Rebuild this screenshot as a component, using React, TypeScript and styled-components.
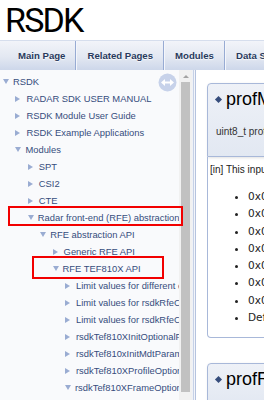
import React from 'react';
import styled, { createGlobalStyle } from 'styled-components';

const GlobalStyle = createGlobalStyle`
  html, body {
    margin: 0;
    padding: 0;
    width: 264px;
    height: 400px;
    overflow: hidden;
    background: #fff;
  }
`;

const Page = styled.div`
  position: relative;
  width: 264px;
  height: 400px;
  display: flex;
  flex-direction: column;
  overflow: hidden;
  font-family: 'Liberation Sans', Arial, sans-serif;
`;

const TitleArea = styled.div`
  height: 40px;
  line-height: 40px;
  padding-left: 5px;
  font-family: Roboto, 'Liberation Sans', sans-serif;
  font-size: 34px;
  letter-spacing: -1.8px;
  color: #000;
`;

const NavBar = styled.div`
  height: 29px;
  display: flex;
  padding-left: 7px;
  border-top: 1px solid #d6deed;
  background: linear-gradient(#f2f4f9 0%, #e3e8f2 55%, #cdd7ea 100%);
`;

const Tab = styled.div`
  display: flex;
  align-items: center;
  padding: 0 10px 0 11px;
  font-size: 9.6px;
  font-weight: bold;
  color: #283a5d;
  text-shadow: 0 1px 1px rgba(255, 255, 255, 0.9);
  white-space: nowrap;
  border-right: 1px solid #97abd3;
  box-shadow: 1px 0 0 #f4f6fb;
`;

const Main = styled.div`
  flex: 1;
  display: flex;
  min-height: 0;
`;

const SideNav = styled.div`
  position: relative;
  width: 179px;
  flex-shrink: 0;
  background: #f9fafc;
  overflow: hidden;
  padding-top: 3px;
  box-sizing: border-box;
`;

const Row = styled.div<{ $level: number }>`
  height: 17px;
  display: flex;
  align-items: center;
  padding-left: ${(p) => 3 + p.$level * 12.4}px;
  white-space: nowrap;
  font-size: 9.4px;
  color: #364d7c;
`;

const Arrow = styled.span<{ $open: boolean }>`
  display: inline-block;
  width: 0;
  height: 0;
  flex-shrink: 0;
  margin-right: ${(p) => (p.$open ? 4 : 6)}px;
  ${(p) =>
    p.$open
      ? `border-left: 3.5px solid transparent;
         border-right: 3.5px solid transparent;
         border-top: 5px solid #9aacd2;`
      : `border-top: 3.5px solid transparent;
         border-bottom: 3.5px solid transparent;
         border-left: 5px solid #9aacd2;`}
`;

const SyncButton = styled.div`
  position: absolute;
  top: 3px;
  right: 2px;
  width: 19px;
  height: 19px;
`;

const Scrollbar = styled.div`
  width: 13px;
  flex-shrink: 0;
  background: #f1f1f1;
  display: flex;
  flex-direction: column;
  align-items: center;
`;

const ScrollArrow = styled.div`
  margin-top: 5px;
  width: 0;
  height: 0;
  border-left: 3px solid transparent;
  border-right: 3px solid transparent;
  border-bottom: 3px solid #a3a3a3;
`;

const ScrollThumb = styled.div`
  margin-top: 4px;
  width: 9px;
  height: 310px;
  background: #c1c1c1;
`;

const Splitter = styled.div`
  width: 5px;
  flex-shrink: 0;
  background: linear-gradient(
    to right,
    #eef1f7 0,
    #eef1f7 1px,
    #c6d1e6 1px,
    #c6d1e6 2px,
    #f3f5fa 2px,
    #f3f5fa 3px,
    #b5c3df 3px,
    #b5c3df 4px,
    #fff 4px
  );
`;

const Content = styled.div`
  flex: 1;
  min-width: 0;
  overflow: hidden;
  padding: 13px 0 0 10px;
`;

const Card = styled.div`
  width: 320px;
  margin-bottom: 25px;
`;

const CardHeader = styled.div`
  border: 1px solid #a8b8d9;
  border-radius: 4px 4px 0 0;
  background: linear-gradient(#eef1f7, #e2e8f2);
  box-shadow: 1px 1px 3px rgba(0, 0, 0, 0.12);
  padding-bottom: 12px;
`;

const CardTitle = styled.div`
  height: 31px;
  display: flex;
  align-items: center;
  padding-left: 8px;
  font-size: 18px;
  color: #000;
`;

const Diamond = styled.span`
  display: inline-block;
  width: 5px;
  height: 5px;
  margin-right: 5px;
  background: #364d7c;
  transform: rotate(45deg);
`;

const Proto = styled.div`
  margin-top: 5px;
  padding-left: 8px;
  height: 24px;
  line-height: 24px;
  font-size: 10px;
  color: #333;
  white-space: nowrap;
`;

const CardBody = styled.div`
  border: 1px solid #a8b8d9;
  border-top: none;
  border-radius: 0 0 4px 4px;
  padding: 4px 0 11px 2px;
  font-size: 10px;
  color: #222;
`;

const ParamLine = styled.div`
  height: 17px;
  line-height: 17px;
  white-space: nowrap;
`;

const ValueList = styled.ul`
  margin: 10px 0 0 0;
  padding-left: 38px;
  list-style: disc;
`;

const ValueItem = styled.li`
  height: 17.3px;
  line-height: 17.3px;
  font-family: 'DejaVu Sans', sans-serif;
  font-size: 10.5px;
  color: #222;
  white-space: nowrap;
`;

const Highlight = styled.div<{ $x: number; $y: number; $w: number; $h: number }>`
  position: absolute;
  left: ${(p) => p.$x}px;
  top: ${(p) => p.$y}px;
  width: ${(p) => p.$w}px;
  height: ${(p) => p.$h}px;
  box-sizing: border-box;
  border: 2px solid #f20000;
  pointer-events: none;
`;

const tabs = ['Main Page', 'Related Pages', 'Modules', 'Data Structures'];

const tree: { label: string; level: number; open: boolean }[] = [
  { label: 'RSDK', level: 0, open: true },
  { label: 'RADAR SDK USER MANUAL', level: 1, open: false },
  { label: 'RSDK Module User Guide', level: 1, open: false },
  { label: 'RSDK Example Applications', level: 1, open: false },
  { label: 'Modules', level: 1, open: true },
  { label: 'SPT', level: 2, open: false },
  { label: 'CSI2', level: 2, open: false },
  { label: 'CTE', level: 2, open: false },
  { label: 'Radar front-end (RFE) abstraction', level: 2, open: true },
  { label: 'RFE abstraction API', level: 3, open: true },
  { label: 'Generic RFE API', level: 4, open: false },
  { label: 'RFE TEF810X API', level: 4, open: true },
  { label: 'Limit values for different chirp parameters', level: 5, open: false },
  { label: 'Limit values for rsdkRfeChirpParams_t', level: 5, open: false },
  { label: 'Limit values for rsdkRfeChirpProfile_t', level: 5, open: false },
  { label: 'rsdkTef810XInitOptionalParams_t', level: 5, open: false },
  { label: 'rsdkTef810xInitMdtParams_t', level: 5, open: false },
  { label: 'rsdkTef810XProfileOptions_t', level: 5, open: false },
  { label: 'rsdkTef810XFrameOptions_t', level: 5, open: true },
];

const values = ['0x00', '0x01', '0x02', '0x03', '0x04', '0x05', '0x06', 'Default'];

function SyncIcon() {
  return (
    <svg width="19" height="19" viewBox="0 0 19 19">
      <circle cx="9.5" cy="9.5" r="9" fill="#c7d2ea" />
      <path d="M5 9.5h9" stroke="#fff" strokeWidth="2" />
      <path d="M3 9.5l4-3.5v7z M16 9.5l-4-3.5v7z" fill="#fff" />
    </svg>
  );
}

export default function App() {
  return (
    <Page>
      <GlobalStyle />
      <TitleArea>RSDK</TitleArea>
      <NavBar>
        {tabs.map((t) => (
          <Tab key={t}>{t}</Tab>
        ))}
      </NavBar>
      <Main>
        <SideNav>
          {tree.map((item, i) => (
            <Row key={i} $level={item.level}>
              <Arrow $open={item.open} />
              {item.label}
            </Row>
          ))}
          <SyncButton>
            <SyncIcon />
          </SyncButton>
        </SideNav>
        <Scrollbar>
          <ScrollArrow />
          <ScrollThumb />
        </Scrollbar>
        <Splitter />
        <Content>
          <Card>
            <CardHeader>
              <CardTitle>
                <Diamond />
                profMode
              </CardTitle>
              <Proto>uint8_t profMode</Proto>
            </CardHeader>
            <CardBody>
              <ParamLine>[in] This input selects the profile mode</ParamLine>
              <ValueList>
                {values.map((v) => (
                  <ValueItem key={v}>{v}</ValueItem>
                ))}
              </ValueList>
            </CardBody>
          </Card>
          <Card>
            <CardHeader>
              <CardTitle>
                <Diamond />
                profRepetitions
              </CardTitle>
            </CardHeader>
          </Card>
        </Content>
      </Main>
      <Highlight $x={8} $y={206} $w={175} $h={20} />
      <Highlight $x={32} $y={256} $w={132} $h={23} />
    </Page>
  );
}
